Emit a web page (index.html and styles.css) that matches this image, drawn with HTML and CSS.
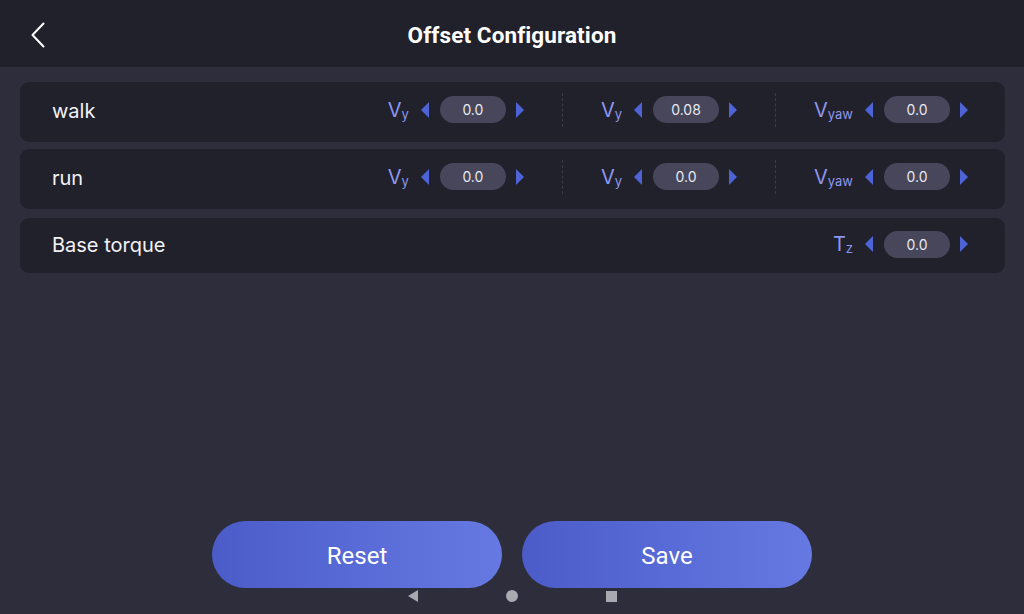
FILE: index.html
```html
<!DOCTYPE html>
<html>
<head>
<meta charset="utf-8">
<link rel="stylesheet" href="styles.css">
</head>
<body>
<div class="app">
  <header class="topbar">
    <button class="back" aria-label="Back">
      <svg width="16" height="26" viewBox="0 0 16 26"><path d="M13.5 1.5 L2.5 13 L13.5 24.5" fill="none" stroke="#ffffff" stroke-width="2" stroke-linecap="round" stroke-linejoin="round"/></svg>
    </button>
    <h1 class="title">Offset Configuration</h1>
  </header>

  <main class="list">
    <section class="card">
      <span class="name">walk</span>
      <div class="controls">
        <div class="ctrl">
          <span class="sym">V<sub>y</sub></span>
          <span class="arrow left"></span>
          <span class="pill">0.0</span>
          <span class="arrow right"></span>
        </div>
        <span class="divider"></span>
        <div class="ctrl">
          <span class="sym">V<sub>y</sub></span>
          <span class="arrow left"></span>
          <span class="pill">0.08</span>
          <span class="arrow right"></span>
        </div>
        <span class="divider"></span>
        <div class="ctrl">
          <span class="sym">V<sub>yaw</sub></span>
          <span class="arrow left"></span>
          <span class="pill">0.0</span>
          <span class="arrow right"></span>
        </div>
      </div>
    </section>

    <section class="card">
      <span class="name">run</span>
      <div class="controls">
        <div class="ctrl">
          <span class="sym">V<sub>y</sub></span>
          <span class="arrow left"></span>
          <span class="pill">0.0</span>
          <span class="arrow right"></span>
        </div>
        <span class="divider"></span>
        <div class="ctrl">
          <span class="sym">V<sub>y</sub></span>
          <span class="arrow left"></span>
          <span class="pill">0.0</span>
          <span class="arrow right"></span>
        </div>
        <span class="divider"></span>
        <div class="ctrl">
          <span class="sym">V<sub>yaw</sub></span>
          <span class="arrow left"></span>
          <span class="pill">0.0</span>
          <span class="arrow right"></span>
        </div>
      </div>
    </section>

    <section class="card short">
      <span class="name">Base torque</span>
      <div class="controls">
        <div class="ctrl">
          <span class="sym">T<sub>z</sub></span>
          <span class="arrow left"></span>
          <span class="pill">0.0</span>
          <span class="arrow right"></span>
        </div>
      </div>
    </section>
  </main>

  <footer class="actions">
    <button class="btn">Reset</button>
    <button class="btn">Save</button>
  </footer>

  <nav class="sysnav">
    <span class="nav-back"></span>
    <span class="nav-home"></span>
    <span class="nav-recent"></span>
  </nav>
</div>
</body>
</html>
```

FILE: styles.css
```css
* { box-sizing: border-box; }
html, body { margin: 0; padding: 0; }
body {
  background: #2e2d3b;
  font-family: Inter, "Noto Sans", sans-serif;
  color: #ffffff;
  width: 1024px;
  height: 614px;
  overflow: hidden;
}
.app {
  position: relative;
  height: 614px;
  display: flex;
  flex-direction: column;
}
.topbar {
  height: 67px;
  background: #21212b;
  display: flex;
  align-items: center;
  justify-content: center;
  position: relative;
}
.back {
  position: absolute;
  left: 30px;
  top: 22px;
  background: none;
  border: 0;
  padding: 0;
  width: 16px;
  height: 26px;
}
.back svg { display: block; }
.title {
  margin: 0;
  font-family: Roboto, sans-serif;
  font-weight: 700;
  font-size: 22.5px;
  letter-spacing: 0.1px;
  padding-top: 2px;
}
.list {
  padding: 15px 19px 0 20px;
  display: flex;
  flex-direction: column;
  gap: 7px;
}
.card {
  height: 60px;
  background: #21212c;
  border-radius: 9px;
  display: flex;
  align-items: center;
  justify-content: space-between;
  padding: 0 37px 0 32px;
}
.card.short {
  height: 55px;
  margin-top: 2px;
}
.name {
  font-size: 20px;
  color: #f2f2f5;
  padding-bottom: 2px;
}
.controls {
  display: flex;
  align-items: center;
  gap: 38px;
  padding-bottom: 5px;
}
.card.short .controls { padding-bottom: 3px; }
.ctrl {
  display: flex;
  align-items: center;
}
.sym {
  font-size: 20px;
  color: #8d96ee;
  line-height: 1;
  margin-right: 12px;
}
.sym sub {
  font-size: 13px;
  vertical-align: baseline;
  position: relative;
  top: 2px;
}
.arrow {
  width: 0;
  height: 0;
  border-top: 8px solid transparent;
  border-bottom: 8px solid transparent;
}
.arrow.left {
  border-right: 8px solid #4d63d6;
  margin-right: 11px;
}
.arrow.right {
  border-left: 8px solid #4d63d6;
  margin-left: 10px;
}
.pill {
  width: 66px;
  height: 27px;
  border-radius: 14px;
  background: #47465a;
  color: #e8e8ef;
  font-size: 14px;
  display: flex;
  align-items: center;
  justify-content: center;
}
.divider {
  width: 0;
  height: 34px;
  border-left: 1px dashed #3c3b4b;
}
.actions {
  margin-top: auto;
  margin-bottom: 26px;
  display: flex;
  justify-content: center;
  gap: 20px;
}
.btn {
  width: 290px;
  height: 67px;
  border: 0;
  border-radius: 34px;
  background: linear-gradient(90deg, #4b5cc9 0%, #6679e2 100%);
  color: #ffffff;
  font-family: Roboto, sans-serif;
  font-size: 24px;
  padding-top: 4px;
}
.sysnav {
  position: absolute;
  left: 0;
  right: 0;
  bottom: 12px;
  height: 12px;
  display: flex;
  justify-content: center;
  align-items: center;
  gap: 88px;
}
.nav-back {
  width: 0;
  height: 0;
  border-top: 6px solid transparent;
  border-bottom: 6px solid transparent;
  border-right: 10px solid #a9a9b1;
}
.nav-home {
  width: 12px;
  height: 12px;
  border-radius: 50%;
  background: #a9a9b1;
}
.nav-recent {
  width: 11px;
  height: 11px;
  background: #a9a9b1;
}
```
